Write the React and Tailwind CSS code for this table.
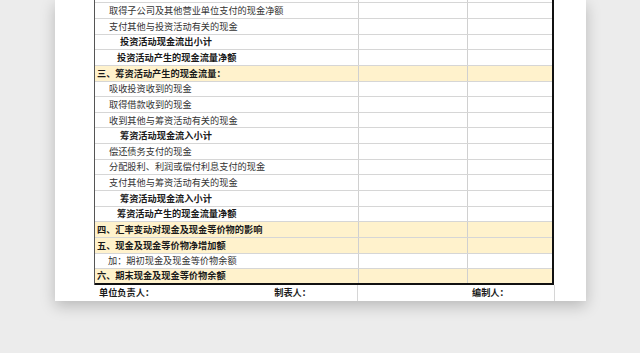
import React from "react";

const rows = [
  { t: "取得子公司及其他营业单位支付的现金净额", k: "item" },
  { t: "支付其他与投资活动有关的现金", k: "item" },
  { t: "投资活动现金流出小计", k: "sub" },
  { t: "投资活动产生的现金流量净额", k: "net" },
  { t: "三、筹资活动产生的现金流量：", k: "head" },
  { t: "吸收投资收到的现金", k: "item" },
  { t: "取得借款收到的现金", k: "item" },
  { t: "收到其他与筹资活动有关的现金", k: "item" },
  { t: "筹资活动现金流入小计", k: "sub" },
  { t: "偿还债务支付的现金", k: "item" },
  { t: "分配股利、利润或偿付利息支付的现金", k: "item" },
  { t: "支付其他与筹资活动有关的现金", k: "item" },
  { t: "筹资活动现金流入小计", k: "sub" },
  { t: "筹资活动产生的现金流量净额", k: "net" },
  { t: "四、汇率变动对现金及现金等价物的影响", k: "head" },
  { t: "五、现金及现金等价物净增加额", k: "head" },
  { t: "加：期初现金及现金等价物余额", k: "item2" },
  { t: "六、期末现金及现金等价物余额", k: "last" },
];

function Row({ t, k }) {
  const yellow = k === "head" || k === "last";
  const bg = yellow ? "bg-[#fff2cc]" : "bg-white";
  const bottom =
    k === "last" ? "border-b-2 border-b-[#111]" : "border-b border-b-[#d6d6d6]";
  const label =
    k === "item"
      ? "pl-[14px] text-[#333]"
      : k === "item2"
      ? "pl-[13px] text-[#333]"
      : k === "sub"
      ? "pl-[25px] font-bold text-[#1a1a1a]"
      : k === "net"
      ? "pl-[22px] font-bold text-[#1a1a1a]"
      : "pl-[2px] font-bold text-[#1a1a1a]";
  return (
    <div className={`flex h-[15.65px] ${bg} ${bottom}`}>
      <div className={`w-[264px] flex items-center whitespace-nowrap border-r border-r-[#d0d0d0] ${label}`}>
        {t}
      </div>
      <div className="w-[109px] border-r border-r-[#d0d0d0]" />
      <div className="flex-1" />
    </div>
  );
}

export default function App() {
  return (
    <div
      className="w-[640px] h-[353px] overflow-hidden bg-[#ececec] text-[9.2px] leading-none"
      style={{ fontFamily: '"Noto Sans CJK SC", "Noto Sans", sans-serif' }}
    >
      <div className="ml-[55px] w-[531px] bg-white shadow-[0_5px_14px_rgba(0,0,0,0.22)] pl-[39px] pr-[32px]">
        {/* worksheet body */}
        <div className="border-l border-l-[#555] border-r-2 border-r-[#111]">
          <div className="h-[3.3px] border-b border-b-[#d6d6d6] flex">
            <div className="w-[264px] border-r border-r-[#d0d0d0]" />
            <div className="w-[109px] border-r border-r-[#d0d0d0]" />
          </div>
          {rows.map((r, i) => (
            <Row key={i} {...r} />
          ))}
        </div>
        {/* signature line */}
        <div className="flex h-[16px] font-bold text-[#1a1a1a] border-r border-r-[#d6d6d6] mr-[-1px]">
          <div className="w-[264px] flex items-center justify-between pl-[5px] pr-[0px] border-r border-r-[#d6d6d6]">
            <span>单位负责人：</span>
            <span className="mr-[46px]">制表人：</span>
          </div>
          <div className="flex-1 flex items-center pl-[114px]">编制人：</div>
        </div>
      </div>
    </div>
  );
}
